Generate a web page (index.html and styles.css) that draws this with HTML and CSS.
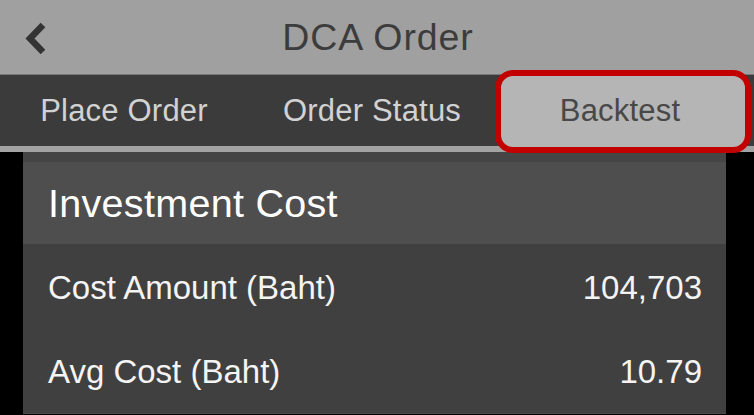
FILE: index.html
```html
<!DOCTYPE html>
<html lang="en">
<head>
<meta charset="utf-8">
<title>DCA Order</title>
<link rel="stylesheet" href="styles.css">
</head>
<body>
<div class="app">
  <header class="topbar">
    <div class="back">
      <svg width="24" height="34" viewBox="0 0 24 34" aria-hidden="true">
        <polyline points="19,3 6,16.5 19,30" fill="none" stroke="#333" stroke-width="6.5" stroke-linejoin="miter"/>
      </svg>
    </div>
    <h1 class="title">DCA Order</h1>
    <div></div>
  </header>
  <nav class="tabs">
    <div class="tab">Place Order</div>
    <div class="tab">Order Status</div>
    <div class="tab active"><span>Backtest</span></div>
  </nav>
  <div class="divider"></div>
  <main class="content">
    <section class="panel">
      <div class="panel-head">Investment Cost</div>
      <div class="row"><span>Cost Amount (Baht)</span><span>104,703</span></div>
      <div class="row last"><span>Avg Cost (Baht)</span><span>10.79</span></div>
    </section>
  </main>
</div>
</body>
</html>
```
FILE: styles.css
```css
* { box-sizing: border-box; }
html, body { margin: 0; padding: 0; }
body {
  background: #000;
  font-family: "Liberation Sans", Arial, sans-serif;
  width: 754px;
  height: 415px;
  overflow: hidden;
}
.app { width: 754px; }

.topbar {
  height: 75px;
  background: #a0a0a0;
  border-bottom: 1px solid #777;
  display: grid;
  grid-template-columns: 1fr auto 1fr;
  align-items: center;
}
.back {
  padding-left: 24px;
  padding-top: 3px;
  display: flex;
  align-items: center;
}
.title {
  margin: 0;
  font-weight: normal;
  font-size: 37.5px;
  letter-spacing: 0.9px;
  color: #3c3c3c;
  padding-top: 1px;
  padding-left: 2px;
}

.tabs {
  height: 71px;
  background: #3b3b3b;
  display: grid;
  grid-template-columns: 248px 248px 248px;
}
.tab {
  display: flex;
  align-items: center;
  justify-content: center;
  font-size: 31px;
  color: #d2d2d2;
  letter-spacing: 0.2px;
}
.tab.active {
  position: relative;
  color: #484848;
}
.tab.active::before {
  content: "";
  position: absolute;
  top: -5px;
  bottom: -7px;
  left: -1px;
  right: -7px;
  border: 6px solid #c20000;
  border-radius: 18px;
  background: #b5b5b5;
  z-index: 0;
}
.tab.active span { position: relative; z-index: 1; }

.divider {
  height: 6px;
  background: #a3a3a3;
}

.content {
  padding: 0 28px 0 23px;
  background: #000;
}
.panel {
  background: #404040;
}
.panel-head {
  border-top: 10px solid #454545;
  height: 92px;
  background: #4e4e4e;
  color: #fff;
  font-size: 39.5px;
  letter-spacing: 0.3px;
  padding-left: 25px;
  display: flex;
  align-items: center;
}
.row {
  height: 85px;
  display: flex;
  align-items: center;
  justify-content: space-between;
  padding: 2px 24px 0 25px;
  color: #f4f4f4;
  font-size: 33px;
}
.row.last {
  border-bottom: 1px solid #4a4a4a;
}
```
